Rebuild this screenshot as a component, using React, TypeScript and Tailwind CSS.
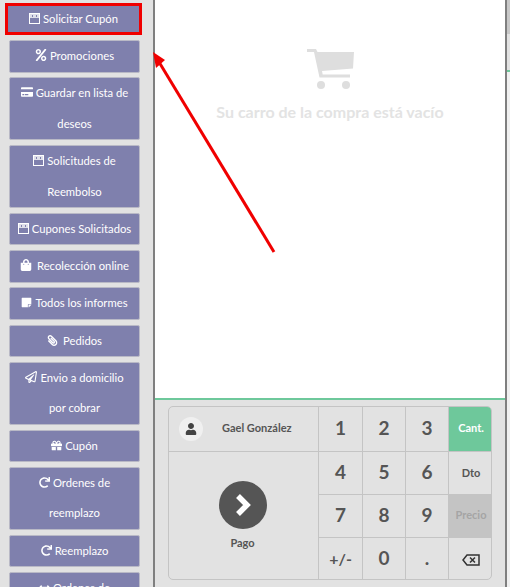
import { Fragment, type ReactNode } from 'react';
import {
  FaArrowsAltH,
  FaCreditCard,
  FaGift,
  FaPaperclip,
  FaPercent,
  FaRedo,
  FaRegPaperPlane,
  FaShoppingBag,
  FaStickyNote,
  FaUser,
} from 'react-icons/fa';

function CouponIcon() {
  return (
    <svg width="11" height="11" viewBox="0 0 11 11">
      <rect x="0.5" y="0.5" width="10" height="10" fill="none" stroke="#fff" />
      <rect x="1" y="1" width="9" height="4" fill="#fff" opacity="0.75" />
      <rect x="3" y="2" width="1" height="2" fill="#7f80ad" />
      <rect x="7" y="2" width="1" height="2" fill="#7f80ad" />
    </svg>
  );
}

function CartIcon() {
  return (
    <svg width="48" height="41" viewBox="0 0 48 41" fill="#dedede">
      <path d="M1 1h9l1.500 3H48l-1 16.500-31 2.500.7 3.500H44v3H13.500L8 4H1z" />
      <circle cx="15" cy="37" r="4" />
      <circle cx="40" cy="37" r="4" />
    </svg>
  );
}

function BackspaceIcon() {
  return (
    <svg width="18" height="12" viewBox="0 0 18 12" fill="none" stroke="#333" strokeWidth="1.500">
      <path d="M5 1h12v10H5L1 6z" />
      <path d="M8 3.500l5 5M13 3.500l-5 5" />
    </svg>
  );
}

const menu: { icon: ReactNode; label: string; active?: boolean; wide?: boolean }[] = [
  { icon: <CouponIcon />, label: 'Solicitar Cupón', active: true },
  { icon: <FaPercent size={12} />, label: 'Promociones' },
  { icon: <FaCreditCard size={12} />, label: 'Guardar en lista de deseos' },
  { icon: <CouponIcon />, label: 'Solicitudes de Reembolso' },
  { icon: <CouponIcon />, label: 'Cupones Solicitados' },
  { icon: <FaShoppingBag size={12} />, label: 'Recolección online', wide: true },
  { icon: <FaStickyNote size={11} />, label: 'Todos los informes' },
  { icon: <FaPaperclip size={11} className="-scale-x-100" />, label: 'Pedidos', wide: true },
  { icon: <FaRegPaperPlane size={12} />, label: 'Envio a domicilio por cobrar' },
  { icon: <FaGift size={11} />, label: 'Cupón' },
  { icon: <FaRedo size={11} />, label: 'Ordenes de reemplazo' },
  { icon: <FaRedo size={11} />, label: 'Reemplazo' },
  { icon: <FaArrowsAltH size={11} />, label: 'Ordenes de devolución' },
];

const keys = [
  ['1', '2', '3', 'Cant.'],
  ['4', '5', '6', 'Dto'],
  ['7', '8', '9', 'Precio'],
  ['+/-', '0', '.', 'del'],
];

function modeClass(key: string) {
  if (key === 'Cant.') return 'bg-[#6ec89b] pb-[2px] text-[11px] font-bold text-white';
  if (key === 'Dto') return 'text-[11px] font-bold text-[#555]';
  if (key === 'Precio') return 'bg-[#c4c4c4] pb-[2px] text-[11px] font-bold text-[#a5a5a5]';
  return 'text-[#555]';
}

export default function App() {
  return (
    <div className="relative flex h-[587px] w-[510px] overflow-hidden bg-[#e2e2e2] font-['Lato',sans-serif]">
      <div className="flex w-[153px] shrink-0 flex-col gap-[4.75px] pt-[6px] pl-[9px]">
        {menu.map((item) => (
          <button
            key={item.label}
            className={`shrink-0 text-center text-[11.25px] text-white ${
              item.active
                ? 'mb-[3.25px] ml-[-1px] w-[131px] bg-[#7f80ad] px-[7px] leading-[26px] outline-[3px] outline-[#f00000]'
                : 'w-[131px] rounded-[2px] border border-[#b9b9c6] bg-[#7f80ad] px-[7px] leading-[30.5px]'
            }`}
          >
            <span className={`inline-block align-[-1px] leading-none ${item.wide ? 'mr-[5px]' : 'mr-[3px]'}`}>
              {item.icon}
            </span>
            {item.label}
          </button>
        ))}
      </div>

      <div className="flex h-full w-[354px] shrink-0 flex-col border-x-2 border-[#7f7f7f]">
        <div className="flex h-[400px] shrink-0 flex-col items-center border-b-2 border-[#6ec89b] bg-white pt-[48px]">
          <CartIcon />
          <p className="mt-[13px] text-[16px] leading-[20px] font-bold text-[#e3e3e3]">Su carro de la compra está vacío</p>
        </div>

        <div className="mt-[6px] ml-[13px] grid h-[174px] w-[324px] grid-cols-[150px_44px_43px_43px_44px] grid-rows-[45px_43px_43px_43px] overflow-hidden rounded-[5px] border border-[#c4c4c4]">
          <div className="flex items-center border-r border-b border-[#c4c4c4] pb-[1px] pl-[10px]">
            <span className="flex size-6 items-center justify-center rounded-full bg-[#f0f0f0] text-[#444]">
              <FaUser size={12} />
            </span>
            <span className="ml-[19px] text-[11px] font-bold text-[#555]">Gael González</span>
          </div>
          {keys.map((row, r) => (
            <Fragment key={r}>
              {r === 1 && (
                <div className="col-start-1 row-span-3 row-start-2 flex flex-col items-center border-r border-[#c4c4c4] pt-[29px] pr-[2px]">
                  <span className="flex size-12 items-center justify-center rounded-full bg-[#555]">
                    <svg width="16" height="24" viewBox="0 0 16 24" fill="none" stroke="#fff" strokeWidth="5.500">
                      <path d="M3 3l9 9-9 9" />
                    </svg>
                  </span>
                  <span className="mt-[6px] text-[11px] font-bold text-[#555]">Pago</span>
                </div>
              )}
              {row.map((key, c) => (
                <button
                  key={key}
                  style={{ gridColumnStart: c + 2, gridRowStart: r + 1 }}
                  className={`flex items-center justify-center ${c < 3 ? 'border-r' : ''} ${r < 3 ? 'border-b' : ''} border-[#c4c4c4] ${
                    c === 3 ? modeClass(key) : `pb-[2px] font-bold text-[#555] ${key === '+/-' ? 'text-[16px]' : 'text-[19px]'}`
                  }`}
                >
                  {key === 'del' ? <BackspaceIcon /> : key}
                </button>
              ))}
            </Fragment>
          ))}
        </div>
      </div>

      {/* thin strip right of the panel */}
      <div className="flex flex-1 flex-col bg-[#f0f0f0]">
        <div className="h-[34px] bg-[#c8c8c8]" />
        <div className="h-[36px] bg-[#e2e2e2]" />
        <div className="h-[2px] bg-[#6ec89b]" />
      </div>

      {/* annotation arrow over the page */}
      <svg className="pointer-events-none absolute top-0 left-0" width="510" height="587">
        <line x1="274" y1="252" x2="159" y2="62" stroke="#f00000" strokeWidth="3" />
        <polygon points="153,52 165,60 156,68" fill="#f00000" />
      </svg>
    </div>
  );
}
